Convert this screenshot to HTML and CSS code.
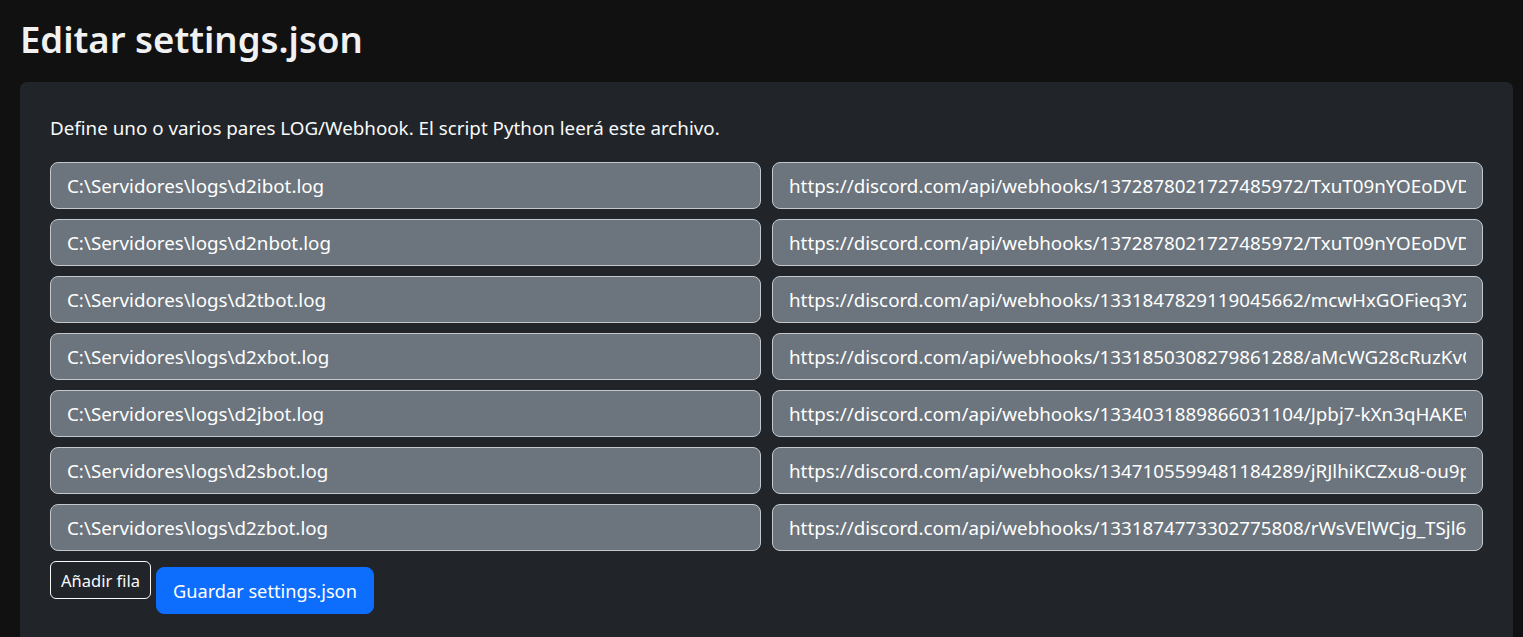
FILE: index.html
```html
<!DOCTYPE html>
<html lang="es">
<head>
<meta charset="utf-8">
<title>Editar settings.json</title>
<link rel="stylesheet" href="styles.css">
</head>
<body>
<h1 class="title">Editar settings.json</h1>
<div class="card">
  <p class="desc">Define uno o varios pares LOG/Webhook. El script Python leerá este archivo.</p>
  <div class="pairs">
    <input class="field" type="text" value="C:\Servidores\logs\d2ibot.log">
    <input class="field" type="text" value="https://discord.com/api/webhooks/1372878021727485972/TxuT09nYOEoDVDxk2mZ">
    <input class="field" type="text" value="C:\Servidores\logs\d2nbot.log">
    <input class="field" type="text" value="https://discord.com/api/webhooks/1372878021727485972/TxuT09nYOEoDVDxk2mZ">
    <input class="field" type="text" value="C:\Servidores\logs\d2tbot.log">
    <input class="field" type="text" value="https://discord.com/api/webhooks/1331847829119045662/mcwHxGOFieq3YZpQw">
    <input class="field" type="text" value="C:\Servidores\logs\d2xbot.log">
    <input class="field" type="text" value="https://discord.com/api/webhooks/1331850308279861288/aMcWG28cRuzKvQe">
    <input class="field" type="text" value="C:\Servidores\logs\d2jbot.log">
    <input class="field" type="text" value="https://discord.com/api/webhooks/1334031889866031104/Jpbj7-kXn3qHAKEwz">
    <input class="field" type="text" value="C:\Servidores\logs\d2sbot.log">
    <input class="field" type="text" value="https://discord.com/api/webhooks/1347105599481184289/jRJlhiKCZxu8-ou9pT">
    <input class="field" type="text" value="C:\Servidores\logs\d2zbot.log">
    <input class="field" type="text" value="https://discord.com/api/webhooks/1331874773302775808/rWsVElWCjg_TSjl6Hq">
  </div>
  <div class="actions">
    <button class="btn-add" type="button">Añadir fila</button>
    <button class="btn-save" type="button">Guardar settings.json</button>
  </div>
</div>
</body>
</html>
```
FILE: styles.css
```css
html, body {
  margin: 0;
  background: #111111;
}
body {
  padding: 0 10px 0 20px;
  font-family: "Noto Sans", "Open Sans", sans-serif;
  color: #f8f9fa;
}
.title {
  margin: 15px 0 19px 0;
  font-size: 36.5px;
  line-height: 48px;
  font-weight: 600;
  color: #f1f1f1;
}
.card {
  background: #212529;
  border-radius: 7px;
  padding: 30px;
}
.desc {
  margin: 2px 0 20px 0;
  font-size: 18.8px;
  line-height: 28px;
  color: #f8f9fa;
}
.pairs {
  display: grid;
  grid-template-columns: 1fr 1fr;
  column-gap: 11px;
  row-gap: 10px;
}
.field {
  box-sizing: border-box;
  width: 100%;
  height: 47px;
  margin: 0;
  padding: 0 16px;
  background: #6c757d;
  border: 1px solid #c4c8cc;
  border-radius: 8px;
  color: #ffffff;
  font-family: "Noto Sans", "Open Sans", sans-serif;
  font-size: 18.8px;
  outline: none;
}
.actions {
  display: flex;
  align-items: flex-start;
  gap: 5px;
}
.btn-add {
  margin-top: 10px;
  box-sizing: border-box;
  height: 38px;
  padding: 0 10px;
  background: transparent;
  border: 1px solid #f8f9fa;
  border-radius: 6px;
  color: #f8f9fa;
  font-family: "Noto Sans", "Open Sans", sans-serif;
  font-size: 16.5px;
}
.btn-save {
  margin-top: 16px;
  box-sizing: border-box;
  height: 47px;
  padding: 0 16px;
  background: #0d6efd;
  border: 1px solid #0d6efd;
  border-radius: 8px;
  color: #ffffff;
  font-family: "Noto Sans", "Open Sans", sans-serif;
  font-size: 18.2px;
}
```
